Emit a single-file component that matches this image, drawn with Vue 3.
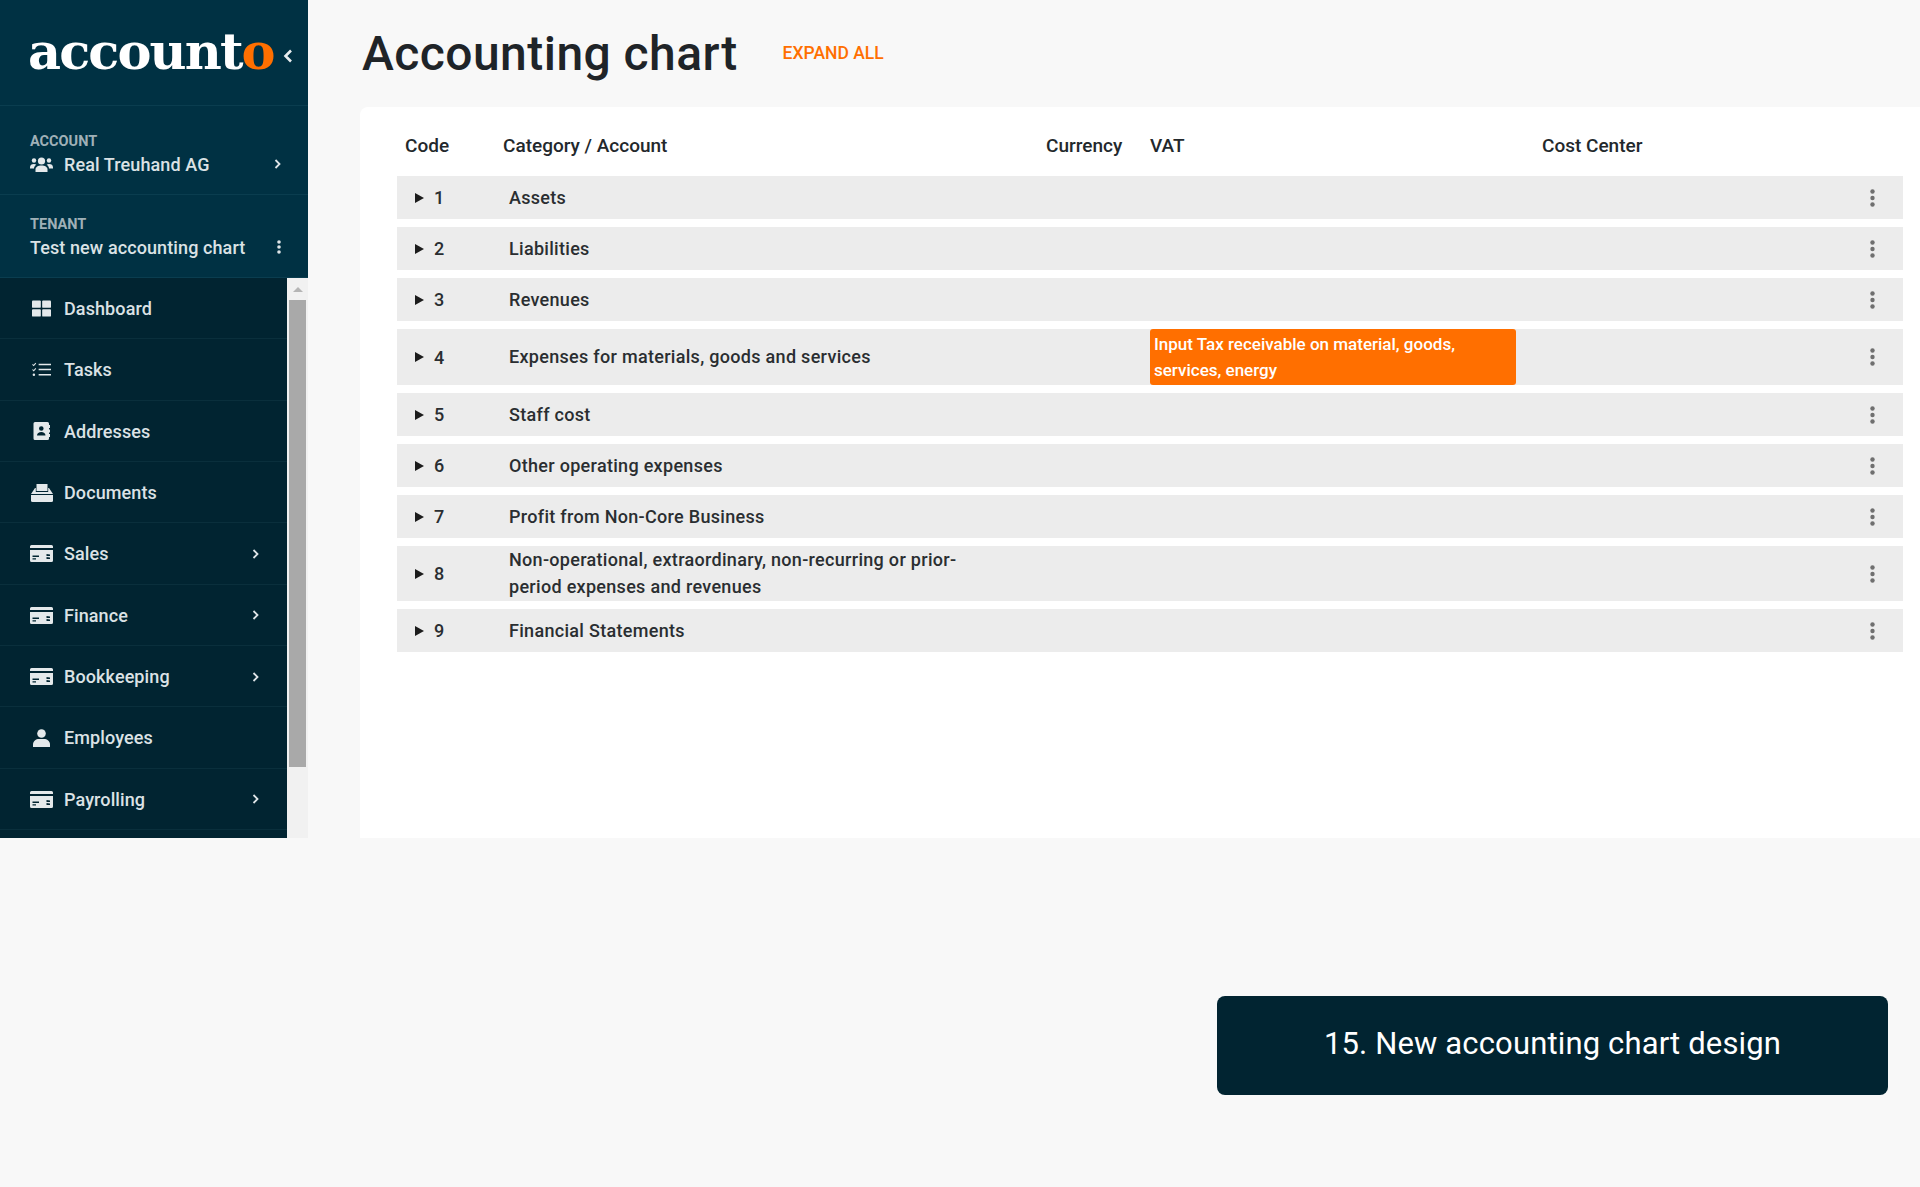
<script setup>
const menu = [
  { label: 'Dashboard', icon: 'grid' },
  { label: 'Tasks', icon: 'tasks' },
  { label: 'Addresses', icon: 'book' },
  { label: 'Documents', icon: 'inbox' },
  { label: 'Sales', icon: 'card', more: true },
  { label: 'Finance', icon: 'card', more: true },
  { label: 'Bookkeeping', icon: 'card', more: true },
  { label: 'Employees', icon: 'user' },
  { label: 'Payrolling', icon: 'card', more: true }
]
const rows = [
  { code: '1', name: 'Assets' },
  { code: '2', name: 'Liabilities' },
  { code: '3', name: 'Revenues' },
  { code: '4', name: 'Expenses for materials, goods and services', vat: 'Input Tax receivable on material, goods, services, energy' },
  { code: '5', name: 'Staff cost' },
  { code: '6', name: 'Other operating expenses' },
  { code: '7', name: 'Profit from Non-Core Business' },
  { code: '8', name: 'Non-operational, extraordinary, non-recurring or prior-period expenses and revenues' },
  { code: '9', name: 'Financial Statements' }
]
</script>

<template>
  <div class="page">
    <div class="frame">
      <aside class="sidebar">
        <div class="brand">
          <span class="logo">account<b>o</b></span>
          <svg class="collapse" width="10" height="14" viewBox="0 0 10 14"><path d="M8 1.500 2.500 7 8 12.500" fill="none" stroke="#e8edef" stroke-width="2.600"/></svg>
        </div>
        <div class="switch account">
          <div class="caption">ACCOUNT</div>
          <div class="value">
            <svg class="value-icon" width="23" height="17" viewBox="0 0 23 17" fill="#e4e9eb">
              <circle cx="11.500" cy="5" r="3.600"/><circle cx="4" cy="4.500" r="2.200"/><circle cx="19" cy="4.500" r="2.200"/>
              <path d="M5.500 16v-2.500C5.500 11 8 9.500 11.500 9.500s6 1.500 6 4V16z"/>
              <path d="M0 11.500C0 9 1.500 8 4 8c1 0 1.800.3 2.300.8C4.800 9.800 4 11 4 12.500H0zM23 11.500C23 9 21.500 8 19 8c-1 0-1.800.3-2.300.8 1.500 1 2.300 2.200 2.300 3.700h4z"/>
            </svg>
            <span class="value-text">Real Treuhand AG</span>
            <svg class="chev" width="7" height="10" viewBox="0 0 7 10"><path d="M1.500 1 5.500 5 1.500 9" fill="none" stroke="#dfe5e8" stroke-width="1.800"/></svg>
          </div>
        </div>
        <div class="switch tenant">
          <div class="caption">TENANT</div>
          <div class="value">
            <span class="value-text">Test new accounting chart</span>
            <svg class="kebab-light" width="4" height="14" viewBox="0 0 4 14" fill="#dfe5e8"><circle cx="2" cy="2" r="1.800"/><circle cx="2" cy="7" r="1.800"/><circle cx="2" cy="12" r="1.800"/></svg>
          </div>
        </div>
        <div class="menu-wrap">
          <nav class="menu">
            <a v-for="item in menu" :key="item.label" class="menu-item">
              <span class="menu-icon">
                <svg v-if="item.icon === 'grid'" width="19" height="17" viewBox="0 0 20 17" fill="#e4e9eb"><rect width="9.300" height="7.800" rx="1"/><rect x="10.700" width="9.300" height="7.800" rx="1"/><rect y="9.200" width="9.300" height="7.800" rx="1"/><rect x="10.700" y="9.200" width="9.300" height="7.800" rx="1"/></svg>
                <svg v-else-if="item.icon === 'tasks'" width="19" height="15" viewBox="0 0 20 15" fill="none" stroke="#e4e9eb"><path d="M.5 2 1.800 3.300 4 .8M.5 7.500 1.800 8.800 4 6.300" stroke-width="1.100"/><circle cx="2" cy="13" r="1.300" fill="#e4e9eb" stroke="none"/><path d="M7 2.200h13M7 7.500h13M7 13h13" stroke-width="1.600"/></svg>
                <svg v-else-if="item.icon === 'book'" width="17" height="18" viewBox="0 0 17 18" fill="#e4e9eb"><path fill-rule="evenodd" d="M2 0h12.500A1.500 1.500 0 0 1 16 1.500v15a1.500 1.500 0 0 1-1.500 1.500H2a1.500 1.500 0 0 1-1.500-1.500v-15A1.500 1.500 0 0 1 2 0zm6.300 4.200a2.300 2.300 0 1 0 0 4.600 2.300 2.300 0 0 0 0-4.600zM4 13.500h8.500c0-2.200-1.800-3.600-4.200-3.600S4 11.300 4 13.500z"/><rect x="16" y="3" width="1" height="3"/><rect x="16" y="7.500" width="1" height="3"/><rect x="16" y="12" width="1" height="3"/></svg>
                <svg v-else-if="item.icon === 'inbox'" width="22" height="18" viewBox="0 0 22 18" fill="#e4e9eb"><path d="M5.500 0h11v7h-11z"/><path d="M4 4h.8v4h12.400V4h.8l4 6H0z"/><path d="M0 11h22v5.500a1.500 1.500 0 0 1-1.500 1.500h-19A1.500 1.500 0 0 1 0 16.500z"/></svg>
                <svg v-else-if="item.icon === 'card'" width="23" height="17" viewBox="0 0 23 17" fill="#e4e9eb"><path fill-rule="evenodd" d="M0 1.500A1.500 1.500 0 0 1 1.500 0h20A1.500 1.500 0 0 1 23 1.500V3H0zM0 5h23v10.500a1.500 1.500 0 0 1-1.500 1.500h-20A1.500 1.500 0 0 1 0 15.500zm2.500 5.500v1.500H9v-1.500zm0 2.800v1.200H6v-1.200zm14-4.300V11H20V9.500zm0 3V14H20v-1.500z"/></svg>
                <svg v-else width="17" height="18" viewBox="0 0 17 18" fill="#e4e9eb"><circle cx="8.500" cy="4.500" r="4.300"/><path d="M0 18v-2.500C0 12 3 10 6 10h5c3 0 6 2 6 5.500V18z"/></svg>
              </span>
              <span class="menu-label">{{ item.label }}</span>
              <svg v-if="item.more" class="menu-chev" width="7" height="10" viewBox="0 0 7 10"><path d="M1.500 1 5.500 5 1.500 9" fill="none" stroke="#dfe5e8" stroke-width="1.800"/></svg>
            </a>
          </nav>
          <div class="scrollbar">
            <div class="scroll-arrow"></div>
            <div class="scroll-thumb"></div>
          </div>
        </div>
      </aside>

      <main class="main">
        <header class="title-row">
          <h1>Accounting chart</h1>
          <a class="expand">EXPAND ALL</a>
        </header>
        <section class="card">
          <div class="grid head">
            <div class="h-code">Code</div>
            <div class="h-name">Category / Account</div>
            <div class="h-cur">Currency</div>
            <div>VAT</div>
            <div>Cost Center</div>
            <div></div>
          </div>
          <div v-for="row in rows" :key="row.code" class="grid row">
            <div class="code"><i class="tri"></i>{{ row.code }}</div>
            <div class="name">{{ row.name }}</div>
            <div></div>
            <div class="vat-cell"><div v-if="row.vat" class="vat">{{ row.vat }}</div></div>
            <div></div>
            <div class="actions">
              <svg width="5" height="18" viewBox="0 0 5 18" fill="#6f6f6f"><circle cx="2.500" cy="2.500" r="2.200"/><circle cx="2.500" cy="9" r="2.200"/><circle cx="2.500" cy="15.500" r="2.200"/></svg>
            </div>
          </div>
        </section>
      </main>
    </div>
    <div class="footer">
      <div class="callout">15. New accounting chart design</div>
    </div>
  </div>
</template>

<style>
html, body { margin: 0; background: #f8f8f8; }
</style>

<style scoped>
.page { width: 1920px; height: 1187px; background: #f8f8f8; overflow: hidden; font-family: "Roboto", "Liberation Sans", sans-serif; }
.frame { display: flex; height: 838px; }
.sidebar { width: 308px; flex: none; display: flex; flex-direction: column; background: #003143; color: #dfe5e8; }
.brand { height: 106px; box-sizing: border-box; display: flex; align-items: center; padding: 0 15px 0 28px; border-bottom: 1px solid #0a3d4f; }
.logo { font-family: "DejaVu Serif", serif; font-weight: 700; font-size: 51px; letter-spacing: -1.9px; color: #fff; line-height: 1; margin-top: -2px; }
.logo b { color: #ff6f00; }
.collapse { margin-left: auto; margin-top: 6px; }
.switch { box-sizing: border-box; padding-left: 30px; border-bottom: 1px solid #0a3d4f; }
.account { height: 89px; padding-top: 28px; }
.tenant { height: 83px; padding-top: 22px; }
.caption { font-size: 14.5px; font-weight: 700; color: #9fb0b7; line-height: 16px; }
.value { display: flex; align-items: center; height: 24px; margin-top: 2px; padding-right: 27px; font-size: 18px; letter-spacing: .1px; font-weight: 500; color: #dbe2e5; }
.value-icon { margin-right: 11px; }
.chev, .kebab-light { margin-left: auto; }
.menu-wrap { flex: 1; display: flex; min-height: 0; background: #012431; }
.menu { width: 287px; flex: none; }
.menu-item { box-sizing: border-box; display: flex; align-items: center; height: 61.33px; padding: 1px 28px 0 30px; border-bottom: 1px solid #0a2f3c; font-size: 18px; letter-spacing: .1px; font-weight: 500; color: #dbe2e5; }
.menu-icon { width: 34px; flex: none; display: flex; justify-content: center; padding-right: 11px; box-sizing: border-box; }
.menu-chev { margin-left: auto; }
.scrollbar { width: 21px; flex: none; background: #f1f1f1; padding-left: 2px; box-sizing: border-box; }
.scroll-arrow { width: 0; height: 0; margin: 9px auto 0; border: 5px solid transparent; border-top: 0; border-bottom: 5px solid #b5b5b5; transform: translateX(-1px); }
.scroll-thumb { width: 17px; height: 467px; margin-top: 8px; background: #a9a9a9; }
.main { flex: 1; min-width: 0; padding-left: 52px; display: flex; flex-direction: column; }
.title-row { height: 107px; display: flex; align-items: center; }
h1 { margin: 0 0 0 2px; font-size: 48px; font-weight: 500; color: #1f2428; letter-spacing: .45px; line-height: 1; }
.expand { margin-left: 45px; font-size: 17.5px; font-weight: 500; color: #ff6f00; padding-bottom: 2px; }
.card { flex: 1; background: #fff; border-radius: 8px 0 0 0; padding-left: 37px; padding-right: 17px; }
.grid { display: grid; grid-template-columns: 112px 537px 104px 392px 1fr 50px; }
.head { height: 69px; box-sizing: border-box; padding-top: 7px; align-items: center; font-size: 19px; font-weight: 500; color: #23282c; }
.h-code { padding-left: 8px; }
.h-name { margin-left: -6px; }
.row { background: #ececec; margin-bottom: 8px; min-height: 43px; align-items: center; font-size: 18px; letter-spacing: .3px; font-weight: 500; color: #2a2e31; }
.code { display: flex; align-items: center; padding-left: 18px; font-size: 18px; }
.tri { width: 0; height: 0; border-left: 9px solid #1c1c1c; border-top: 5px solid transparent; border-bottom: 5px solid transparent; margin-right: 10px; }
.name { line-height: 27px; max-width: 480px; padding-bottom: 1px; }
.vat-cell { align-self: stretch; display: flex; margin-right: 26px; }
.vat { flex: 1; box-sizing: border-box; background: #ff6f00; color: #fff; border-radius: 3px; padding: 2px 4px; font-size: 17px; letter-spacing: 0; line-height: 26px; }
.actions { display: flex; justify-content: flex-start; padding-left: 17px; }
.footer { display: flex; justify-content: flex-end; padding: 158px 32px 0 0; }
.callout { width: 671px; height: 99px; box-sizing: border-box; background: #012431; color: #fff; border-radius: 8px; display: flex; align-items: center; justify-content: center; padding-bottom: 4px; font-size: 31px; letter-spacing: .15px; }
</style>
